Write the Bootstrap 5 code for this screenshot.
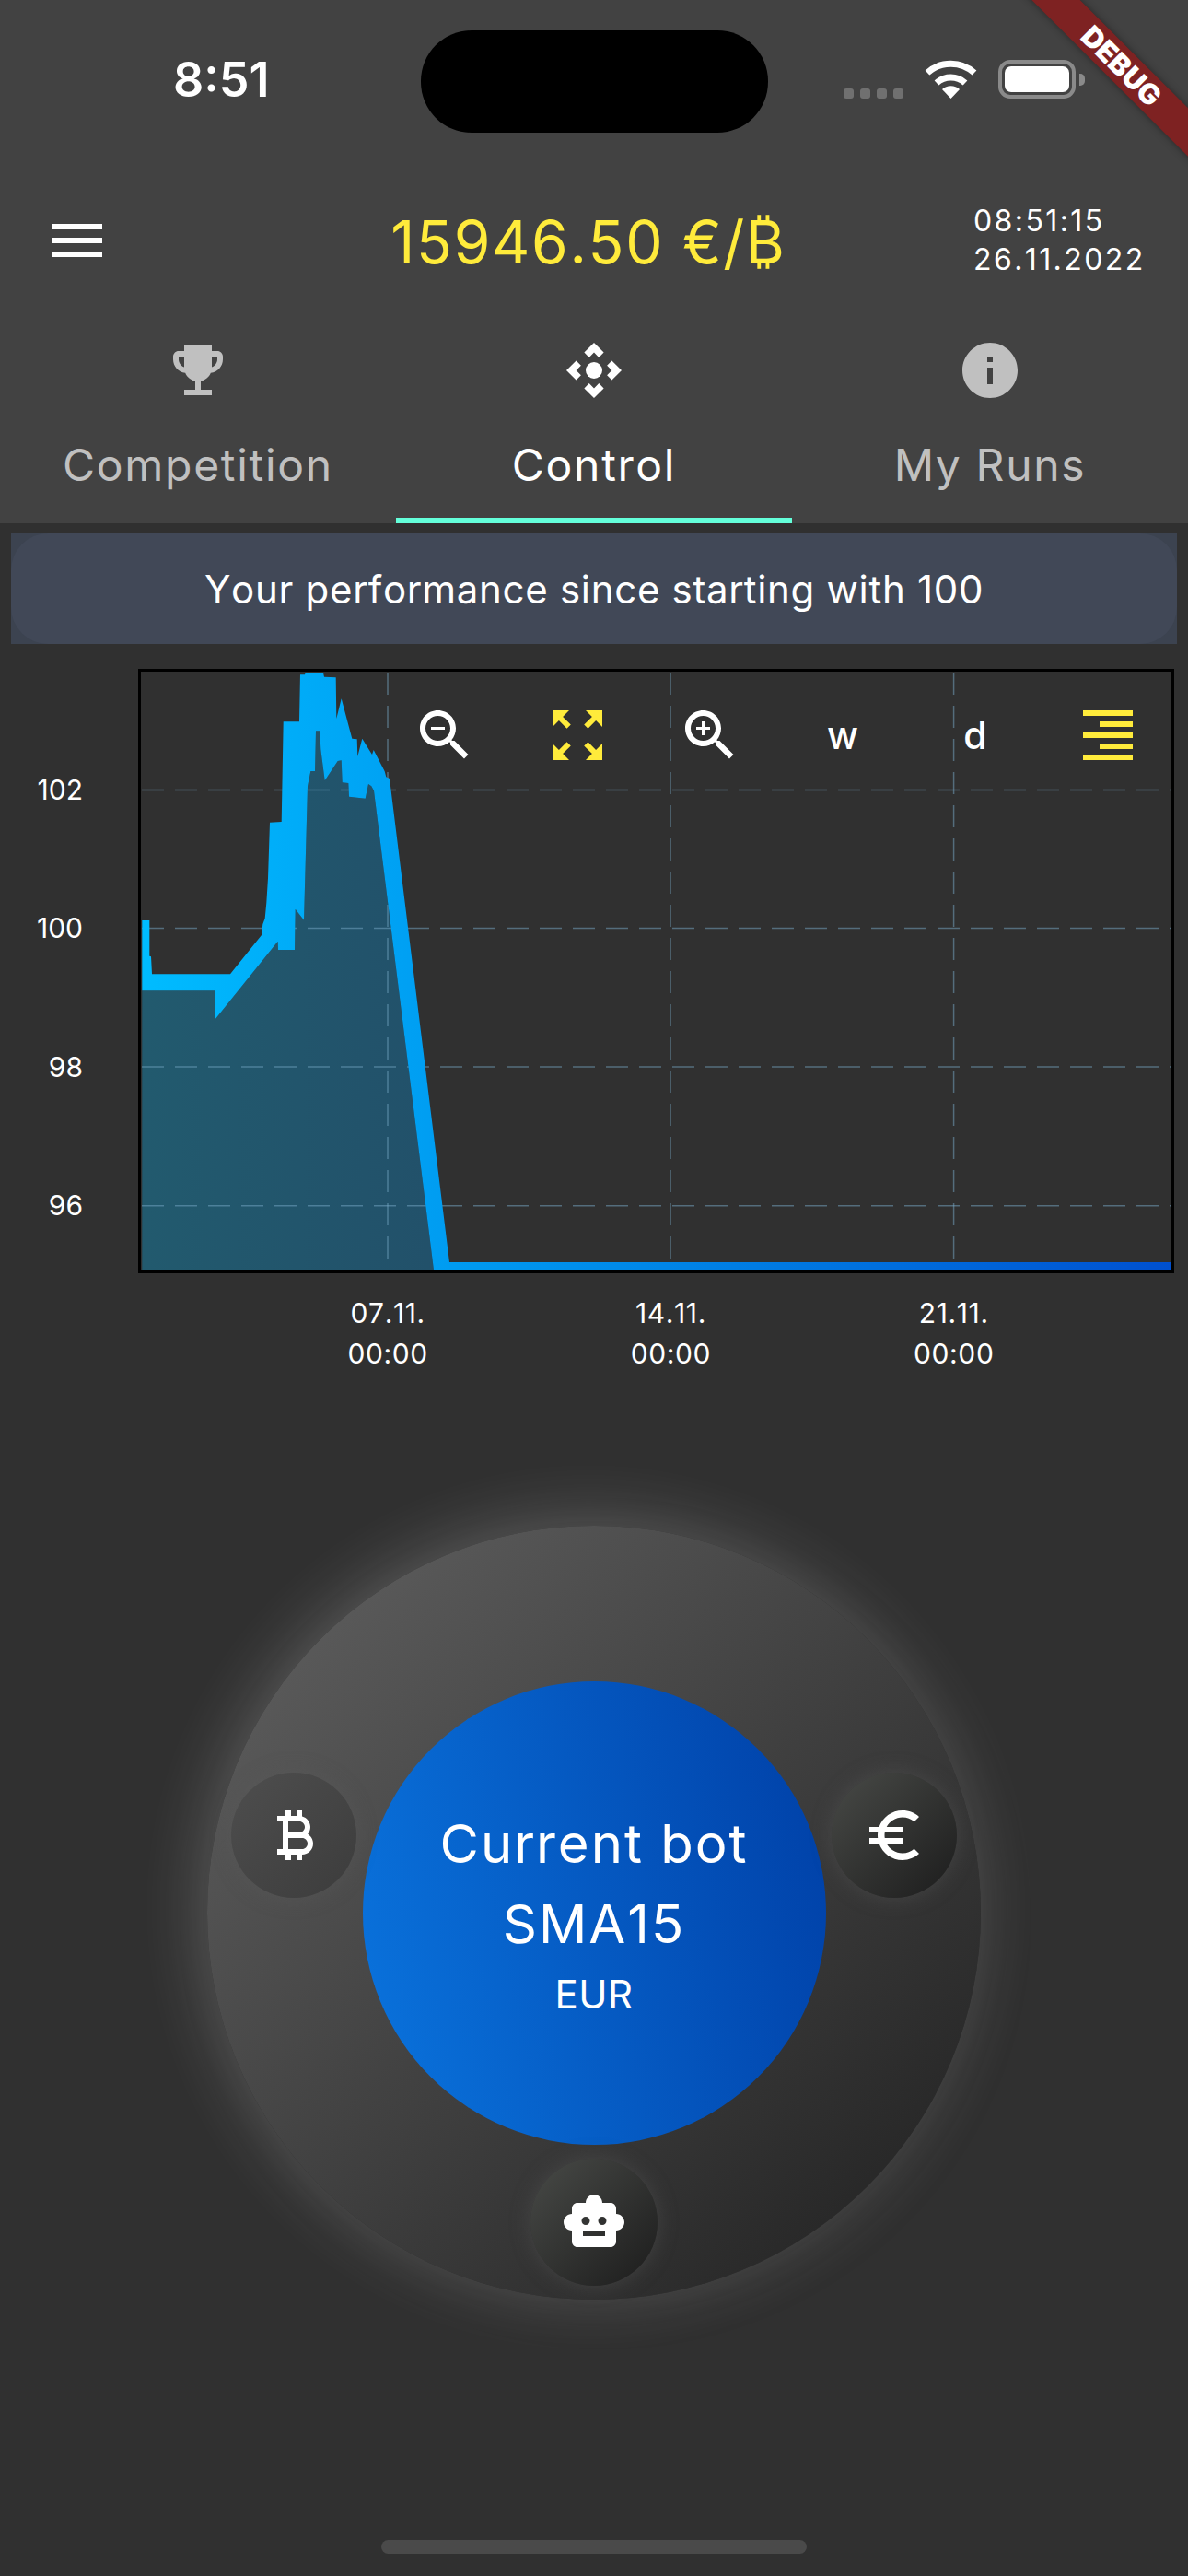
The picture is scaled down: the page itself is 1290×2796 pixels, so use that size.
<!DOCTYPE html>
<html lang="en">
<head>
  <meta charset="UTF-8">
  <title>Control</title>
  <meta name="viewport" content="width=device-width, initial-scale=1" />
  <link href="https://cdn.jsdelivr.net/npm/bootstrap@5.3.2/dist/css/bootstrap.min.css" rel="stylesheet">
  <style>
    body { background: #303030; color: #fff; font-family: Inter, "DejaVu Sans", sans-serif; font-kerning: none; }
    .phone { width: 1290px; height: 2796px; overflow: hidden; background: #303030; }
    .top-head { height: 568px; background: #424242; }
    .status-row { height: 192px; padding-top: 33px; }
    .status-time { width: 457px; padding-left: 188px; font-size: 52px; font-weight: 600; line-height: 108px; letter-spacing: 0; }
    .island { width: 377px; height: 111px; border-radius: 55px; background: #000; }
    .status-icons { margin: 32px 0 0 82px; height: 42px; }
    .sig-dot { width: 11px; height: 11px; border-radius: 3px; background: #707070; margin-right: 7px; }
    .wifi-ico { margin-left: 16px; }
    .batt { width: 84px; height: 42px; margin-left: 23px; border: 4px solid #8a8a8a; border-radius: 13px; padding: 3px; }
    .batt-in { width: 100%; height: 100%; background: #fff; border-radius: 7px; }
    .batt-nub { width: 6px; height: 13px; margin: 0 0 14px 4px; background: #8a8a8a; border-radius: 0 5px 5px 0; }
    .debug-band { left: 1018px; top: 53px; width: 400px; height: 37px; background: #7e2222; transform: rotate(45deg); box-shadow: 0 0 8px rgba(0,0,0,.4); color: #fff; font-weight: 900; font-size: 31px; line-height: 37px; text-align: center; }
    .app-row { height: 138px; }
    .burger { width: 54px; margin-left: 57px; }
    .burger i { display: block; height: 6px; background: #fff; margin-bottom: 9px; }
    .burger i:last-child { margin-bottom: 0; }
    .price-txt { left: 0; right: 12px; top: 31px; font-size: 64px; color: #ffeb3b; line-height: 80px; letter-spacing: 1.7px; }
    .clock-txt { margin-left: auto; width: 233px; font-size: 32px; line-height: 42px; letter-spacing: 2.4px; }
    .tab-row { height: 238px; }
    .tab-item { width: 430px; height: 238px; padding-top: 36px; color: #c0c0c0; border-bottom: 6.5px solid transparent; }
    .tab-item.on { color: #fff; border-bottom-color: #64ffda; }
    .tab-item svg { width: 72px; height: 72px; display: block; fill: currentColor; }
    .tab-lbl { font-size: 48px; line-height: 60px; margin-top: 37px; letter-spacing: 1.7px; }
    .perf-wrap { margin: 11px 12px 0; height: 120px; background: #3c4350; }
    .perf-box { height: 120px; background: #414857; border-radius: 40px; font-size: 42px; letter-spacing: .7px; }
    .chart-row { height: 683px; }
    .axis-y { width: 150px; padding: 83px 60px 0 0; text-align: right; font-size: 30px; }
    .axis-y div { height: 150.3px; line-height: 150.3px; }
    .plot-box { width: 1125px; height: 656px; border: 3px solid #000; margin-top: 27px; }
    .plot-box svg { display: block; width: 1119px; height: 650px; }
    .plot-tools { top: 33px; right: 33px; gap: 72px; }
    .plot-tools svg, .plot-tools span { width: 72px; height: 72px; display: block; }
    .plot-tools span { font-size: 41px; font-weight: 500; line-height: 72px; text-align: center; }
    .wh { fill: #fff; }
    .ye { fill: #ffeb3b; }
    .axis-x { padding: 21px 0 0 267.5px; font-size: 30px; line-height: 44px; text-align: center; letter-spacing: .6px; }
    .axis-x div { width: 307.3px; }
    .dial { width: 840px; height: 840px; margin: 165px auto 0; border-radius: 50%; background: linear-gradient(135deg, #5a5a5a 12%, #292929 85%); box-shadow: -6px -6px 70px rgba(255,255,255,.22), 12px 12px 50px rgba(0,0,0,.1); }
    .dial-core { width: 503px; height: 503px; padding-top: 2px; border-radius: 50%; background: linear-gradient(78deg, #0a74de, #003fa6); font-size: 58px; letter-spacing: 2px; text-align: center; }
    .dial-core div { line-height: 87px; }
    .dial-core .dial-sub { font-size: 42px; line-height: 65px; letter-spacing: .5px; }
    .dial-btn { width: 136px; height: 136px; border-radius: 50%; box-shadow: 0 0 22px rgba(92,92,92,.45); background: linear-gradient(135deg, #484a47, #1c1c1c); }
    .dial-btn svg { fill: #fff; width: 72px; height: 72px; }
    .btn-btc { left: 26px; top: 268px; background: linear-gradient(135deg, #4e4e4e, #3c3c3c); }
    .btn-eur { left: 678px; top: 268px; }
    .btn-bot { left: 351px; top: 687px; width: 138px; height: 138px; }
    .home-bar { width: 462px; height: 15px; margin: 261px auto 0; border-radius: 8px; background: #4a4a4a; }
  </style>
</head>
<body class="m-0">
  <div class="phone position-relative">
    <div class="top-head">
      <!-- status bar -->
      <div class="status-row d-flex align-items-start">
        <div class="status-time">8:51</div>
        <div class="island"></div>
        <div class="status-icons d-flex align-items-end">
          <div class="sig-dot"></div><div class="sig-dot"></div><div class="sig-dot"></div><div class="sig-dot"></div>
          <svg class="wifi-ico" width="57" height="42" viewBox="0 0 57 42" fill="none" stroke="#fff" stroke-width="7">
            <path d="M3 14 A38 38 0 0 1 54 14"/>
            <path d="M13 25 A23 23 0 0 1 44 25"/>
            <path d="M28.5 42 L19 32 A14 14 0 0 1 38 32 Z" fill="#fff" stroke="none"/>
          </svg>
          <div class="batt"><div class="batt-in"></div></div>
          <div class="batt-nub"></div>
        </div>
      </div>
      <!-- app bar -->
      <div class="app-row d-flex align-items-center position-relative">
        <div class="burger"><i></i><i></i><i></i></div>
        <div class="price-txt position-absolute text-center">15946.50 €/₿</div>
        <div class="clock-txt">08:51:15<br>26.11.2022</div>
      </div>
      <!-- tabs -->
      <div class="tab-row d-flex">
        <div class="tab-item d-flex flex-column align-items-center">
          <svg viewBox="0 0 24 24"><path d="M19 5h-2V3H7v2H5c-1.1 0-2 .9-2 2v1c0 2.55 1.92 4.63 4.39 4.94.63 1.5 1.98 2.63 3.61 2.96V19H7v2h10v-2h-4v-3.1c1.63-.33 2.98-1.46 3.61-2.96C19.08 12.63 21 10.55 21 8V7c0-1.1-.9-2-2-2zM5 8V7h2v3.82C5.84 10.4 5 9.3 5 8zm14 0c0 1.3-.84 2.4-2 2.82V7h2v1z"/></svg>
          <div class="tab-lbl">Competition</div>
        </div>
        <div class="tab-item on d-flex flex-column align-items-center">
          <svg viewBox="0 0 24 24"><path d="M15.54 5.54L13.77 7.3 12 5.54 10.23 7.3 8.46 5.54 12 2zm2.92 10l-1.76-1.77L18.46 12l-1.76-1.77 1.76-1.77L22 12zm-10 2.92l1.77-1.76L12 18.46l1.77-1.76 1.77 1.76L12 22zm-2.92-10l1.76 1.77L5.54 12l1.76 1.77-1.76 1.77L2 12z"/><circle cx="12" cy="12" r="3"/></svg>
          <div class="tab-lbl">Control</div>
        </div>
        <div class="tab-item d-flex flex-column align-items-center">
          <svg viewBox="0 0 24 24"><path d="M12 2C6.48 2 2 6.48 2 12s4.48 10 10 10 10-4.48 10-10S17.52 2 12 2zm1 15h-2v-6h2v6zm0-8h-2V7h2v2z"/></svg>
          <div class="tab-lbl">My Runs</div>
        </div>
      </div>
    </div>

    <div class="perf-wrap">
      <div class="perf-box d-flex align-items-center justify-content-center">Your performance since starting with 100</div>
    </div>

    <!-- chart -->
    <div class="chart-row d-flex">
      <div class="axis-y">
        <div>102</div><div>100</div><div>98</div><div>96</div>
      </div>
      <div class="plot-box position-relative">
        <svg viewBox="153 729 1119 650">
          <defs>
            <linearGradient id="lineGrad" gradientUnits="userSpaceOnUse" x1="154" y1="0" x2="1272" y2="0">
              <stop offset="0" stop-color="#00bcff"/>
              <stop offset="1" stop-color="#0050d0"/>
            </linearGradient>
          </defs>
          <polygon fill="url(#lineGrad)" opacity=".3" points="154.3,1075.3 233.3,1075.3 233.3,1106.7 301.7,1021.7 302,1031 320,1031 320.7,986.7 330,998.7 334,853.3 337.3,837 342,837 343,793.3 347.3,793.3 348.3,813.3 352.7,847.3 366.7,826 370.7,825.3 371.7,849.3 378.3,850 379,864.7 396.7,866.7 400,851 403.3,853.3 406,858.3 471,1378.5 154.3,1378.5"/>
          <g fill="none" stroke="rgba(120,170,200,.5)" stroke-width="1.5" stroke-dasharray="24 12">
            <path d="M154 857.6H1272"/>
            <path d="M154 1007.6H1272"/>
            <path d="M154 1158H1272"/>
            <path d="M154 1308.7H1272"/>
            <path d="M421 730V1378"/>
            <path d="M728 730V1378"/>
            <path d="M1035.6 730V1378"/>
          </g>
          <polygon fill="url(#lineGrad)" points="154.3,999 162.3,999 162.3,1037.7 164,1038.3 165,1057.3 250,1057.3 284,1015 285.3,1003.3 287.7,996.7 289.3,980 291,953.3 293,892.7 305.7,892 307.7,783.3 325,783.3 326,732.3 331,732.3 331.7,730.3 351,730.3 352,734.7 364.7,735.3 365.3,780 370.7,758.3 382.3,801.7 387.7,802.3 388.3,821 393.3,801.7 404,819 405.7,814 417.7,837.3 419.3,843.3 423,845 488,1370 1272,1370 1272,1378.5 471,1378.5 406,858.3 403.3,853.3 400,851 396.7,866.7 379,864.7 378.3,850 371.7,849.3 370.7,825.3 366.7,826 352.7,847.3 348.3,813.3 347.3,793.3 343,793.3 342,837 337.3,837 334,853.3 330,998.7 320.7,986.7 320,1031 302,1031 301.7,1021.7 233.3,1106.7 233.3,1075.3 154.3,1075.3"/>
        </svg>
        <div class="plot-tools position-absolute d-flex">
          <svg viewBox="0 0 24 24" class="wh"><path d="M15.5 14h-.79l-.28-.27C15.41 12.59 16 11.11 16 9.5 16 5.91 13.09 3 9.5 3S3 5.91 3 9.5 5.91 16 9.5 16c1.61 0 3.09-.59 4.23-1.57l.27.28v.79l5 4.99L20.49 19l-4.99-5zm-6 0C7.01 14 5 11.99 5 9.5S7.01 5 9.5 5 14 7.01 14 9.5 11.99 14 9.5 14zM7 9h5v1H7z"/></svg>
          <svg viewBox="0 0 24 24" class="ye"><path d="M15 3l2.3 2.3-2.89 2.87 1.42 1.42L18.7 6.7 21 9V3zM3 9l2.3-2.3 2.87 2.89 1.42-1.42L6.7 5.3 9 3H3zm6 12l-2.3-2.3 2.89-2.87-1.42-1.42L5.3 17.3 3 15v6zm12-6l-2.3 2.3-2.87-2.89-1.42 1.42 2.89 2.87L15 21h6z"/></svg>
          <svg viewBox="0 0 24 24" class="wh"><path d="M15.5 14h-.79l-.28-.27C15.41 12.59 16 11.11 16 9.5 16 5.91 13.09 3 9.5 3S3 5.91 3 9.5 5.91 16 9.5 16c1.61 0 3.09-.59 4.23-1.57l.27.28v.79l5 4.99L20.49 19l-4.99-5zm-6 0C7.01 14 5 11.99 5 9.5S7.01 5 9.5 5 14 7.01 14 9.5 11.99 14 9.5 14z"/><path d="M12 10h-2v2H9v-2H7V9h2V7h1v2h2v1z"/></svg>
          <span>w</span>
          <span>d</span>
          <svg viewBox="0 0 24 24" class="ye"><path d="M3 21h18v-2H3v2zm6-4h12v-2H9v2zm-6-4h18v-2H3v2zm6-4h12V7H9v2zM3 3v2h18V3H3z"/></svg>
        </div>
      </div>
    </div>
    <div class="axis-x d-flex">
      <div>07.11.<br>00:00</div>
      <div>14.11.<br>00:00</div>
      <div>21.11.<br>00:00</div>
    </div>

    <!-- dial -->
    <div class="dial position-relative d-flex align-items-center justify-content-center">
      <div class="dial-core d-flex flex-column justify-content-center">
        <div>Current bot</div>
        <div>SMA15</div>
        <div class="dial-sub">EUR</div>
      </div>
      <div class="dial-btn btn-btc position-absolute d-flex align-items-center justify-content-center">
        <svg viewBox="0 0 24 24"><path d="M17.06 11.57c.59-.69.94-1.59.94-2.57 0-1.86-1.27-3.43-3-3.87V3h-2v2h-2V3H9v2H6v2h2v10H6v2h3v2h2v-2h2v2h2v-2c2.21 0 4-1.79 4-4 0-1.45-.78-2.73-1.94-3.43zM10 7h4c1.1 0 2 .9 2 2s-.9 2-2 2h-4V7zm5 10h-5v-4h5c1.1 0 2 .9 2 2s-.9 2-2 2z"/></svg>
      </div>
      <div class="dial-btn btn-eur position-absolute d-flex align-items-center justify-content-center">
        <svg viewBox="0 0 24 24"><path d="M15 18.5c-2.51 0-4.68-1.42-5.76-3.5H15v-2H8.58c-.05-.33-.08-.66-.08-1s.03-.67.08-1H15V9H9.24C10.32 6.92 12.5 5.5 15 5.5c1.61 0 3.09.59 4.23 1.57L21 5.3C19.41 3.87 17.3 3 15 3c-3.92 0-7.24 2.51-8.48 6H3v2h3.06c-.04.33-.06.66-.06 1s.02.67.06 1H3v2h3.52c1.24 3.49 4.56 6 8.48 6 2.31 0 4.41-.87 6-2.3l-1.78-1.77c-1.13.98-2.6 1.57-4.22 1.57z"/></svg>
      </div>
      <div class="dial-btn btn-bot position-absolute d-flex align-items-center justify-content-center">
        <svg viewBox="0 0 24 24"><path d="M20 9V7c0-1.1-.9-2-2-2h-3c0-1.66-1.34-3-3-3S9 3.34 9 5H6c-1.1 0-2 .9-2 2v2c-1.66 0-3 1.34-3 3s1.34 3 3 3v4c0 1.1.9 2 2 2h12c1.1 0 2-.9 2-2v-4c1.66 0 3-1.34 3-3s-1.34-3-3-3zM7.5 11.5c0-.83.67-1.5 1.5-1.5s1.5.67 1.5 1.5S9.83 13 9 13s-1.5-.67-1.5-1.5zM16 17H8v-2h8v2zm-1-4c-.83 0-1.5-.67-1.5-1.5S14.17 10 15 10s1.5.67 1.5 1.5S15.83 13 15 13z"/></svg>
      </div>
    </div>

    <div class="home-bar"></div>
    <div class="debug-band position-absolute">DEBUG</div>
  </div>
  <script src="https://cdn.jsdelivr.net/npm/bootstrap@5.3.2/dist/js/bootstrap.bundle.min.js"></script>
</body>
</html>
